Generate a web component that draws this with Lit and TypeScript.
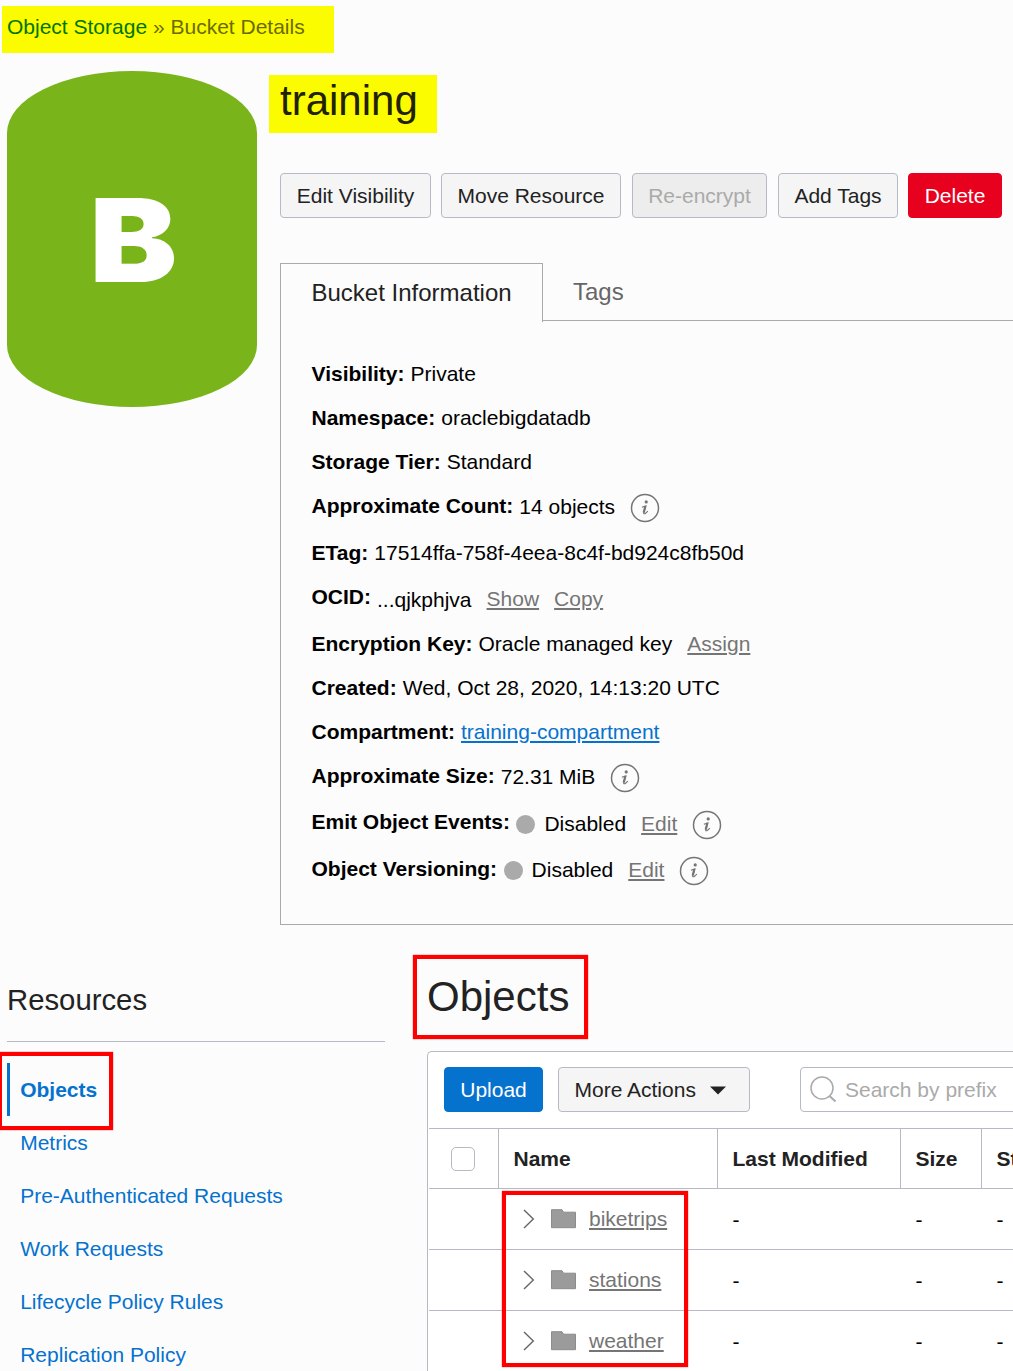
import { LitElement, html, css, svg, nothing } from "lit";
import { customElement } from "lit/decorators.js";

interface InfoRow {
  label: string;
  value: string;
  height: number;
  drop?: number;
  link?: boolean;
  dot?: boolean;
  actions?: string[];
  info?: boolean;
}

const INFO: InfoRow[] = [
  { label: "Visibility:", value: "Private", height: 44 },
  { label: "Namespace:", value: "oraclebigdatadb", height: 44 },
  { label: "Storage Tier:", value: "Standard", height: 44 },
  { label: "Approximate Count:", value: "14 objects", height: 47, drop: 1, info: true },
  { label: "ETag:", value: "17514ffa-758f-4eea-8c4f-bd924c8fb50d", height: 44 },
  { label: "OCID:", value: "...qjkphjva", height: 47, drop: 3, actions: ["Show", "Copy"] },
  { label: "Encryption Key:", value: "Oracle managed key", height: 44, actions: ["Assign"] },
  { label: "Created:", value: "Wed, Oct 28, 2020, 14:13:20 UTC", height: 44 },
  { label: "Compartment:", value: "training-compartment", height: 44, link: true },
  { label: "Approximate Size:", value: "72.31 MiB", height: 46, drop: 1, info: true },
  { label: "Emit Object Events:", value: "Disabled", height: 47, drop: 2, dot: true, actions: ["Edit"], info: true },
  { label: "Object Versioning:", value: "Disabled", height: 47, drop: 1, dot: true, actions: ["Edit"], info: true },
];

const NAV = ["Objects", "Metrics", "Pre-Authenticated Requests", "Work Requests", "Lifecycle Policy Rules", "Replication Policy"];
const FOLDERS = ["biketrips", "stations", "weather"];

const infoIcon = html`<svg class="info" width="30" height="30" viewBox="0 0 30 30">
  ${svg`<circle cx="15" cy="15" r="13.5" fill="none" stroke="#757575" stroke-width="1.5"/>
  <circle cx="16.2" cy="8.9" r="1.6" fill="#757575"/>
  <path d="M11.9 14.2 L15.8 13 L13.8 19.3 Q13.4 21.2 14.9 20.6 Q16.4 19.9 17.8 18" fill="none" stroke="#757575" stroke-width="1.2"/>
  <path d="M15.4 13 L13.7 19.6" fill="none" stroke="#757575" stroke-width="2.2"/>`}
</svg>`;

@customElement("app-root")
export class AppRoot extends LitElement {
  static styles = css`
    :host {
      display: block;
      position: relative;
      width: 1013px;
      height: 1371px;
      overflow: hidden;
      background: #fcfcfc;
      color: #222;
      font: 21px/24px "Liberation Sans", Arial, sans-serif;
      white-space: nowrap;
    }
    * { box-sizing: border-box; }
    svg { display: block; flex: none; }
    .crumbs {
      margin: 6px 0 0 2px;
      width: 332px;
      height: 47px;
      padding: 9px 5px 0;
      background: #fcfc00;
      color: #6b6b00;
      display: flow-root;
    }
    .crumbs a { color: #007500; }
    .top { display: flex; height: 872px; padding-left: 7px; }
    .bucket {
      flex: none;
      width: 250px;
      height: 336px;
      margin: 18px 23px 0 0;
      border-radius: 125px / 62px;
      background: #78b41a;
    }
    .letter { font: 900 115.5px Inter, "Liberation Sans", sans-serif; fill: #fff; }
    .main { flex: 1; min-width: 0; display: flex; flex-direction: column; }
    h1, h2, h3 { margin: 0; font-weight: 400; }
    h1 {
      width: 168px;
      height: 58px;
      margin: 22px 0 0 -11px;
      padding-left: 11px;
      background: #fcfc00;
      font-size: 42px;
      line-height: 52px;
      color: #222200;
    }
    .buttons { display: flex; margin-top: 40px; }
    button {
      flex: none;
      height: 45px;
      padding: 0;
      margin: 0;
      border: 1px solid #b5bac4;
      border-radius: 4px;
      background: #f5f5f5;
      color: #222;
      font: inherit;
    }
    .edit { width: 151px; margin-right: 10px; }
    .move { width: 180px; margin-right: 11px; }
    .reenc { width: 135px; margin-right: 11px; background: #ededed; color: #aaa; }
    .tags { width: 120px; margin-right: 10px; }
    .del { width: 94px; background: #e8001f; border-color: #e8001f; color: #fff; }
    .tabs { display: flex; margin-top: 45px; height: 58px; font-size: 24px; }
    .tab {
      width: 263px;
      height: 59px;
      padding: 15px 0 0 30.5px;
      line-height: 28px;
      border: 1px solid #aaa;
      border-bottom: 0;
    }
    .tab2 { flex: 1; padding: 15px 0 0 30px; line-height: 28px; color: #666; border-bottom: 1px solid #aaa; }
    .panel {
      height: 604px;
      border: 1px solid #aaa;
      border-width: 0 0 1px 1px;
      padding: 41px 0 0 30.5px;
      color: #000;
    }
    .row { display: flex; align-items: flex-start; }
    .row b { margin-right: 6px; }
    .value { display: flex; }
    .act, .name { color: #757575; text-decoration: underline; }
    .act { margin-left: 15px; }
    .drop3 .act { margin-top: -1px; }
    .blue { color: #0572ce; text-decoration: underline; }
    .dot { width: 19px; height: 19px; border-radius: 50%; background: #aaa; margin: 2.5px 9px 0 0.5px; }
    .info { margin: -2.5px 0 -5px 15px; }
    .bottom { display: flex; padding-left: 7px; }
    .side { width: 378px; margin-right: 42px; flex: none; }
    h3 { font-size: 29.3px; line-height: 34px; margin-top: 58px; height: 59px; border-bottom: 1px solid #b5bac4; }
    .nav { margin-top: 21px; color: #0572ce; }
    .nav div { height: 53px; line-height: 53px; padding-left: 13.2px; }
    .nav .on { font-weight: 700; border-left: 3px solid #0572ce; padding-left: 10.2px; }
    .objects { flex: 1; min-width: 0; }
    h2 { font-size: 42px; line-height: 48px; margin-top: 48px; }
    .box {
      margin-top: 30px;
      height: 330px;
      border: 1px solid #b5bac4;
      border-width: 1px 0 0 1px;
      border-top-left-radius: 5px;
      background: #fff;
      overflow: hidden;
    }
    .bar { display: flex; height: 76px; padding: 15px 0 0 16px; }
    .upload { width: 99px; background: #0572ce; border-color: #0572ce; color: #fff; }
    .more { width: 192px; margin-left: 15px; padding-left: 15.5px; display: flex; align-items: center; gap: 14px; }
    .more svg { margin-top: 2px; }
    .search {
      flex: none;
      width: 240px;
      height: 45px;
      margin-left: 50px;
      padding-left: 9px;
      border: 1px solid #b5bac4;
      border-radius: 4px;
      color: #aaa;
      display: flex;
      align-items: center;
      gap: 8px;
    }
    .grid { display: grid; grid-template-columns: 69px 219px 183px 81px 60px; border-top: 1px solid #b5bac4; margin-left: 1px; }
    .grid > div { height: 61px; border-bottom: 1px solid #b5bac4; padding-left: 15px; display: flex; align-items: center; }
    .grid > .th { height: 60px; font-weight: 700; border-left: 1px solid #b5bac4; padding-left: 14.5px; }
    .grid > .th:first-child { border-left: 0; padding-left: 22px; }
    .check { width: 24px; height: 24px; border: 1px solid #b5bac4; border-radius: 5px; background: #fff; }
    .grid > .dash { color: #000; padding: 2px 0 0 15.5px; }
    .grid > .item { padding-left: 24.5px; }
    .folder { margin: 0 13px 0 16.5px; }
    .mark { position: absolute; border: 4px solid #f00; box-shadow: 0 0 1px #f00; }
    .m1 { left: 413px; top: 955px; width: 175px; height: 84px; }
    .m2 { left: -2px; top: 1052px; width: 115px; height: 78px; }
    .m3 { left: 502px; top: 1191px; width: 186px; height: 176px; }
  `;

  private row(r: InfoRow) {
    return html`<div class="row" style="height:${r.height}px">
      <b>${r.label}</b>
      <div class="value drop${r.drop ?? 0}" style="padding-top:${r.drop ?? 0}px">
        ${r.dot ? html`<span class="dot"></span>` : nothing}
        <span class=${r.link ? "blue" : ""}>${r.value}</span>
        ${(r.actions ?? []).map((a) => html`<span class="act">${a}</span>`)}
        ${r.info ? infoIcon : nothing}
      </div>
    </div>`;
  }

  private folder(name: string) {
    return html`<div></div>
      <div class="item">
        <svg width="12" height="20" viewBox="0 0 12 20"><path d="M1 1 L10.3 10 L1 19" fill="none" stroke="#666" stroke-width="1.4"/></svg>
        <svg class="folder" width="25" height="20" viewBox="0 0 25 20"><path d="M0.5 0.7 H11 L12.6 3.2 H24.5 V18.7 H0.5 Z" fill="#9b9b9b" stroke="#8c8c8c"/></svg>
        <span class="name">${name}</span>
      </div>
      <div class="dash">-</div><div class="dash">-</div><div class="dash">-</div>`;
  }

  render() {
    return html`
      <div class="crumbs"><a>Object Storage</a> » Bucket Details</div>
      <div class="top">
        <svg class="bucket" viewBox="0 0 250 336"><text class="letter" transform="translate(82.5 211) scale(1.135 1)">B</text></svg>
        <div class="main">
          <h1>training</h1>
          <div class="buttons">
            <button class="edit">Edit Visibility</button>
            <button class="move">Move Resource</button>
            <button class="reenc">Re-encrypt</button>
            <button class="tags">Add Tags</button>
            <button class="del">Delete</button>
          </div>
          <div class="tabs"><div class="tab">Bucket Information</div><div class="tab2">Tags</div></div>
          <div class="panel">${INFO.map((r) => this.row(r))}</div>
        </div>
      </div>
      <div class="bottom">
        <div class="side">
          <h3>Resources</h3>
          <div class="nav">${NAV.map((n, i) => html`<div class=${i === 0 ? "on" : ""}>${n}</div>`)}</div>
        </div>
        <div class="objects">
          <h2>Objects</h2>
          <div class="box">
            <div class="bar">
              <button class="upload">Upload</button>
              <button class="more">More Actions
                <svg width="16" height="9" viewBox="0 0 16 9"><path d="M0 0.5 H16 L8 8.5 Z" fill="#222"/></svg>
              </button>
              <div class="search">
                <svg width="27" height="27" viewBox="0 0 27 27"><circle cx="12" cy="12" r="11" fill="none" stroke="#aaa" stroke-width="1.5"/><path d="M19.5 20 L25.5 25.5" stroke="#aaa" stroke-width="2"/></svg>
                Search by prefix
              </div>
            </div>
            <div class="grid">
              <div class="th"><span class="check"></span></div>
              <div class="th">Name</div><div class="th">Last Modified</div><div class="th">Size</div><div class="th">Status</div>
              ${FOLDERS.map((f) => this.folder(f))}
            </div>
          </div>
        </div>
      </div>
      <div class="mark m1"></div><div class="mark m2"></div><div class="mark m3"></div>
    `;
  }
}
